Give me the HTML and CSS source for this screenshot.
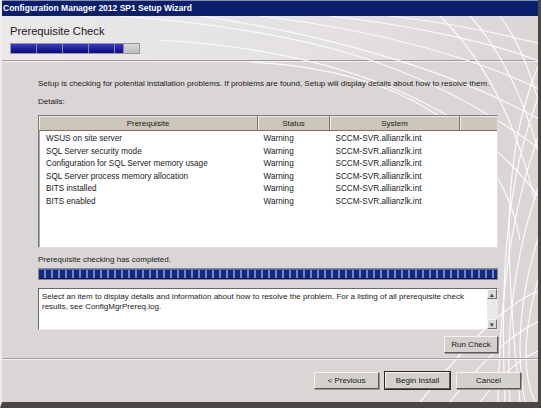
FILE: index.html
```html
<!DOCTYPE html>
<html lang="en">
<head>
    <meta charset="UTF-8">
    <title>Configuration Manager 2012 SP1 Setup Wizard</title>
    <link rel="stylesheet" href="styles.css">
</head>
<body>
    <div class="window">
        <!-- decorative swooshes behind the right side -->
        <svg class="swoosh" width="541" height="408" viewBox="0 0 541 408">
            <g fill="none" stroke="#ffffff" stroke-width="1.2" opacity="0.9">
                <path d="M120 16 C300 30 420 60 541 150"/>
                <path d="M200 16 C330 35 450 70 541 120"/>
                <path d="M260 16 C380 30 480 60 541 90"/>
                <path d="M330 16 C420 26 500 45 541 62"/>
                <path d="M390 16 C460 24 510 36 541 44"/>
                <path d="M160 40 C330 50 470 100 541 200"/>
                <path d="M250 62 C400 70 500 130 520 240"/>
                <path d="M541 60 C500 150 505 260 520 402"/>
                <path d="M541 90 C505 180 500 280 505 402"/>
                <path d="M541 130 C510 210 500 300 498 402"/>
                <path d="M541 180 C515 250 505 330 510 402"/>
                <path d="M541 230 C520 290 515 350 525 402"/>
                <path d="M541 270 C525 320 520 370 535 402"/>
                <path d="M470 16 C510 60 530 120 541 160"/>
                <path d="M440 16 C495 70 520 140 535 200"/>
                <path d="M500 16 C525 50 535 90 541 110"/>
                <path d="M420 402 C470 340 510 300 541 290"/>
                <path d="M450 402 C490 350 520 330 541 320"/>
                <path d="M480 402 C505 370 525 355 541 350"/>
            </g>
        </svg>

        <div class="titlebar">Configuration Manager 2012 SP1 Setup Wizard</div>

        <div class="header">
            <h1>Prerequisite Check</h1>
            <div class="steps">
                <span class="step"></span>
                <span class="step"></span>
                <span class="step"></span>
                <span class="step"></span>
                <span class="step current"></span>
                <span class="step-rest"></span>
            </div>
        </div>

        <div class="content">
            <p class="intro">Setup is checking for potential installation problems. If problems are found, Setup will display details about how to resolve them.</p>
            <p class="label">Details:</p>

            <div class="grid">
                <table>
                    <thead>
                        <tr>
                            <th class="col-prereq">Prerequisite</th>
                            <th class="col-status">Status</th>
                            <th class="col-system">System</th>
                            <th class="col-empty"></th>
                        </tr>
                    </thead>
                    <tbody>
                        <tr><td>WSUS on site server</td><td>Warning</td><td>SCCM-SVR.allianzlk.int</td><td></td></tr>
                        <tr><td>SQL Server security mode</td><td>Warning</td><td>SCCM-SVR.allianzlk.int</td><td></td></tr>
                        <tr><td>Configuration for SQL Server memory usage</td><td>Warning</td><td>SCCM-SVR.allianzlk.int</td><td></td></tr>
                        <tr><td>SQL Server process memory allocation</td><td>Warning</td><td>SCCM-SVR.allianzlk.int</td><td></td></tr>
                        <tr><td>BITS installed</td><td>Warning</td><td>SCCM-SVR.allianzlk.int</td><td></td></tr>
                        <tr><td>BITS enabled</td><td>Warning</td><td>SCCM-SVR.allianzlk.int</td><td></td></tr>
                    </tbody>
                </table>
            </div>

            <p class="status">Prerequisite checking has completed.</p>
            <div class="progress"></div>

            <div class="msgbox">
                <p>Select an item to display details and information about how to resolve the problem. For a listing of all prerequisite check results, see ConfigMgrPrereq.log.</p>
                <div class="scrollbar">
                    <span class="arrow">&#9652;</span>
                    <span class="track"></span>
                    <span class="arrow">&#9662;</span>
                </div>
            </div>

            <div class="run-row">
                <button class="btn btn-run">Run Check</button>
            </div>
        </div>

        <div class="footer">
            <button class="btn">&lt; Previous</button>
            <button class="btn btn-default">Begin Install</button>
            <button class="btn">Cancel</button>
        </div>
    </div>
</body>
</html>
```

FILE: styles.css
```css
body {
    margin: 0;
    font-family: "Liberation Sans", Arial, sans-serif;
    font-size: 8px;
    color: #1a1a1a;
    background: #3a3836;
}

.window {
    position: relative;
    width: 536px;
    height: 402px;
    background: #dad6d5;
    border-left: 2px solid #eeecec;
    border-right: 3px solid #4a4644;
    border-bottom: 6px solid #4a4644;
    box-sizing: content-box;
    overflow: hidden;
}

.swoosh {
    position: absolute;
    left: -2px;
    top: 0;
    pointer-events: none;
}

.titlebar {
    position: relative;
    height: 15px;
    line-height: 15px;
    border-top: 1px solid #8890b0;
    background: #0b1f6f;
    color: #ffffff;
    font-weight: bold;
    font-size: 8.5px;
    padding-left: 1px;
}

.header {
    height: 45px;
    padding: 8px 0 0 8px;
    box-sizing: border-box;
    background: linear-gradient(90deg, rgba(238,236,236,0.85) 0%, rgba(238,236,236,0.5) 60%, rgba(238,236,236,0) 100%);
    border-bottom: 1px solid #9c9898;
    box-shadow: 0 1px 0 #f4f2f2;
}

h1 {
    margin: 0;
    font-size: 11.2px;
    font-weight: normal;
    color: #202020;
    line-height: 14px;
}

.steps {
    display: flex;
    width: 128px;
    height: 9px;
    margin-top: 5px;
    border: 1px solid #9a9898;
    background: #c8c6c6;
}

.step {
    width: 25px;
    height: 9px;
    background: linear-gradient(#3a3ad0, #1c1c9c 60%, #0c0c70);
    border-right: 1px solid #8a8ab8;
}

.step.current {
    width: 8px;
}

.step-rest {
    flex: 1;
    background: linear-gradient(#d8d6d6, #bebcbc);
}

.content {
    position: relative;
    padding: 0 40px 0 36px;
}

p {
    margin: 0;
}

.intro {
    margin-top: 18px;
    line-height: 9px;
    white-space: nowrap;
}

.label {
    margin-top: 9px;
    line-height: 9px;
}

.grid {
    margin-top: 9px;
    height: 131px;
    background: #ffffff;
    border: 1px solid #7a7878;
    border-right-color: #e0dede;
    border-bottom-color: #e0dede;
    box-shadow: inset 1px 1px 0 #a8a6a6;
}

table {
    border-collapse: collapse;
    width: 100%;
}

th {
    height: 14px;
    padding: 0;
    font-weight: normal;
    background: #cdc6bb;
    border-right: 1px solid #7a746c;
    border-bottom: 1px solid #7a746c;
    box-shadow: inset 1px 1px 0 #f0ece6;
}

.col-prereq {
    width: 218px;
}

.col-status {
    width: 71px;
}

.col-system {
    width: 129px;
}

.col-empty {
    border-right: none;
}

td {
    height: 12.6px;
    padding: 0 0 0 7px;
    line-height: 12.6px;
    white-space: nowrap;
    font-size: 8.2px;
}

tbody tr:first-child td {
    padding-top: 2px;
}

td:nth-child(2) {
    padding-left: 6px;
}

td:nth-child(3) {
    padding-left: 6px;
}

.status {
    margin-top: 7px;
    line-height: 9px;
}

.progress {
    height: 10px;
    margin-top: 4px;
    border: 1px solid #8a8888;
    background: repeating-linear-gradient(90deg, #0f2a80 0, #0f2a80 5px, #7088c8 5px, #7088c8 7px);
    box-shadow: inset 0 1px 0 #5068b0, inset 0 -1px 0 #081850;
}

.msgbox {
    display: flex;
    height: 40px;
    margin-top: 8px;
    background: #ffffff;
    border: 1px solid #6a6868;
    border-right-color: #e8e6e6;
    border-bottom-color: #e8e6e6;
}

.msgbox p {
    flex: 1;
    padding: 3px 3px 0 3px;
    line-height: 9.6px;
}

.scrollbar {
    display: flex;
    flex-direction: column;
    width: 10px;
    background: #ebe9e8;
}

.arrow {
    height: 10px;
    line-height: 10px;
    font-size: 7px;
    text-align: center;
    color: #404040;
    background: #dcd8d6;
    border: 1px solid #f8f8f8;
    border-right-color: #707070;
    border-bottom-color: #707070;
    box-sizing: border-box;
}

.track {
    flex: 1;
}

.run-row {
    display: flex;
    justify-content: flex-end;
    margin-top: 6px;
}

.btn {
    height: 17px;
    padding: 0;
    font-family: "Liberation Sans", Arial, sans-serif;
    font-size: 8px;
    color: #1a1a1a;
    background: #d4d0cc;
    border: 1px solid #f6f4f2;
    border-right-color: #5a5856;
    border-bottom-color: #5a5856;
    box-shadow: 1px 1px 0 #9a9896;
}

.btn-run {
    width: 54px;
}

.footer {
    position: relative;
    display: flex;
    justify-content: flex-end;
    gap: 6px;
    margin-top: 5px;
    padding: 13px 17px 0 0;
    border-top: 1px solid #a4a0a0;
    box-shadow: inset 0 1px 0 #f2f0f0;
}

.footer .btn {
    width: 65px;
}

.btn-default {
    outline: 1px solid #2a2828;
}
```
